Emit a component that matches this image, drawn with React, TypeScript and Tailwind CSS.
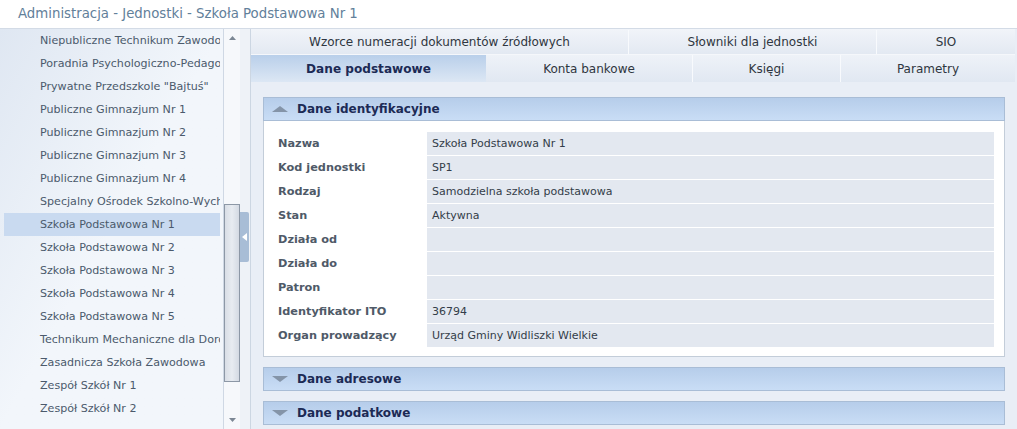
import React from "react";

const units = [
  "Niepubliczne Technikum Zawodowe",
  "Poradnia Psychologiczno-Pedagogiczna",
  'Prywatne Przedszkole "Bajtuś"',
  "Publiczne Gimnazjum Nr 1",
  "Publiczne Gimnazjum Nr 2",
  "Publiczne Gimnazjum Nr 3",
  "Publiczne Gimnazjum Nr 4",
  "Specjalny Ośrodek Szkolno-Wychowawczy",
  "Szkoła Podstawowa Nr 1",
  "Szkoła Podstawowa Nr 2",
  "Szkoła Podstawowa Nr 3",
  "Szkoła Podstawowa Nr 4",
  "Szkoła Podstawowa Nr 5",
  "Technikum Mechaniczne dla Dorosłych",
  "Zasadnicza Szkoła Zawodowa",
  "Zespół Szkół Nr 1",
  "Zespół Szkół Nr 2",
];

const fields: [string, string][] = [
  ["Nazwa", "Szkoła Podstawowa Nr 1"],
  ["Kod jednostki", "SP1"],
  ["Rodzaj", "Samodzielna szkoła podstawowa"],
  ["Stan", "Aktywna"],
  ["Działa od", ""],
  ["Działa do", ""],
  ["Patron", ""],
  ["Identyfikator ITO", "36794"],
  ["Organ prowadzący", "Urząd Gminy Widliszki Wielkie"],
];

const Triangle = ({ up }: { up?: boolean }) => (
  <svg width="16" height="8" viewBox="0 0 16 8" className="shrink-0">
    {up ? <path d="M0 7 L8 1 L16 7 Z" fill="#8494a8" /> : <path d="M0 1 L16 1 L8 7 Z" fill="#8494a8" />}
  </svg>
);

const SectionHeader = ({ title, open }: { title: string; open?: boolean }) => (
  <div className="h-[24px] flex items-center gap-[9px] pl-[8px] border border-[#a9bdd6] bg-gradient-to-b from-[#b6cdea] to-[#c9ddf5]">
    <Triangle up={open} />
    <span className="text-[12px] font-bold text-[#1c2a55]">{title}</span>
  </div>
);

const App = () => {
  const selected = 8;

  return (
    <div className="w-[1017px] h-[429px] overflow-hidden bg-white flex flex-col" style={{ fontFamily: '"DejaVu Sans", Verdana, sans-serif' }}>
      {/* title */}
      <div className="h-[29px] shrink-0 flex items-center pl-[18px] border-b border-[#d3dbe6] text-[13.3px] text-[#62809a]">
        Administracja - Jednostki - Szkoła Podstawowa Nr 1
      </div>

      <div className="flex flex-1 min-h-0">
        {/* units list */}
        <div className="w-[224px] shrink-0 border-r border-[#cfd8e4] bg-gradient-to-br from-[#dfe7f2] via-[#f2f6fb] to-[#f2f6fb] overflow-hidden">
          {units.map((u, i) => (
            <div
              key={u}
              className={`h-[23px] flex items-center pt-[2px] pl-[36px] ml-[4px] mr-[3px] whitespace-nowrap overflow-hidden text-[11.1px] text-[#4b5a6c] ${i === selected ? "bg-[#c9daf0]" : ""}`}
            >
              {u}
            </div>
          ))}
        </div>

        {/* scrollbar */}
        <div className="w-[16px] shrink-0 bg-[#f6f8fb] flex flex-col items-center">
          <div className="h-[18px] flex items-center justify-center">
            <svg width="7" height="4" viewBox="0 0 7 4"><path d="M0 4 L3.5 0 L7 4 Z" fill="#7c8794" /></svg>
          </div>
          <div className="h-[157px]" />
          <div className="w-[16px] h-[178px] border border-[#8d98a6] bg-gradient-to-r from-[#d9dee6] via-[#e8ecf1] to-[#d4dae3]" />
          <div className="flex-1 flex items-end justify-center pb-[7px]">
            <svg width="7" height="4" viewBox="0 0 7 4"><path d="M0 0 L7 0 L3.5 4 Z" fill="#7c8794" /></svg>
          </div>
        </div>

        {/* splitter */}
        <div className="w-[11px] shrink-0 border-r border-[#ccd6e2] bg-[#eef2f7] flex flex-col">
          <div className="h-[183px]" />
          <div className="w-[9px] h-[50px] rounded-r-[2px] bg-[#a8bdd6] flex items-center justify-center">
            <svg width="5" height="8" viewBox="0 0 5 8"><path d="M5 0 L0 4 L5 8 Z" fill="#ffffff" /></svg>
          </div>
        </div>

        {/* right content */}
        <div className="flex-1 min-w-0 flex flex-col bg-[#e9eef6] pr-[2px]">
          {/* tabs row 1 */}
          <div className="h-[26px] shrink-0 flex pt-[1px] text-[12px] text-[#2f3640] bg-gradient-to-b from-[#f1f4f9] to-[#e3e9f2] border-b border-[#f5f7fb]">
            <div className="w-[378px] flex items-center justify-center border-r border-[#f8fafd]">Wzorce numeracji dokumentów źródłowych</div>
            <div className="w-[248px] flex items-center justify-center border-r border-[#f8fafd]">Słowniki dla jednostki</div>
            <div className="flex-1 flex items-center justify-center">SIO</div>
          </div>
          {/* tabs row 2 */}
          <div className="h-[27px] shrink-0 flex text-[12px] text-[#2f3640]">
            <div className="w-[235px] flex items-center justify-center pt-[1px] font-bold text-[12.1px] text-[#1c2a55] bg-gradient-to-b from-[#b9cfea] to-[#dce7f4]">Dane podstawowe</div>
            <div className="w-[207px] flex items-center justify-center pt-[1px] border-r border-[#f8fafd] bg-gradient-to-b from-[#eef2f8] to-[#e1e8f2]">Konta bankowe</div>
            <div className="w-[148px] flex items-center justify-center pt-[1px] border-r border-[#f8fafd] bg-gradient-to-b from-[#eef2f8] to-[#e1e8f2]">Księgi</div>
            <div className="flex-1 flex items-center justify-center pt-[1px] bg-gradient-to-b from-[#eef2f8] to-[#e1e8f2]">Parametry</div>
          </div>

          {/* panels */}
          <div className="flex flex-col gap-[10px] pl-[12px] pr-[10px] pt-[15px]">
            <div>
              <SectionHeader title="Dane identyfikacyjne" open />
              <div className="bg-white border border-t-0 border-[#c3cdd9] pl-[14px] pr-[10px] pt-[11px] pb-[9px] flex flex-col gap-[1px]">
                {fields.map(([label, value]) => (
                  <div key={label} className="flex h-[23px]">
                    <div className="w-[149px] shrink-0 text-[11.3px] font-bold text-[#4f5a68] pt-[4px]">{label}</div>
                    <div className="flex-1 bg-[#e3e8f0] flex items-center pt-[2px] pl-[5px] text-[11px] text-[#333d49]">{value}</div>
                  </div>
                ))}
              </div>
            </div>
            <SectionHeader title="Dane adresowe" />
            <SectionHeader title="Dane podatkowe" />
          </div>
        </div>
      </div>
    </div>
  );
};

export default App;
